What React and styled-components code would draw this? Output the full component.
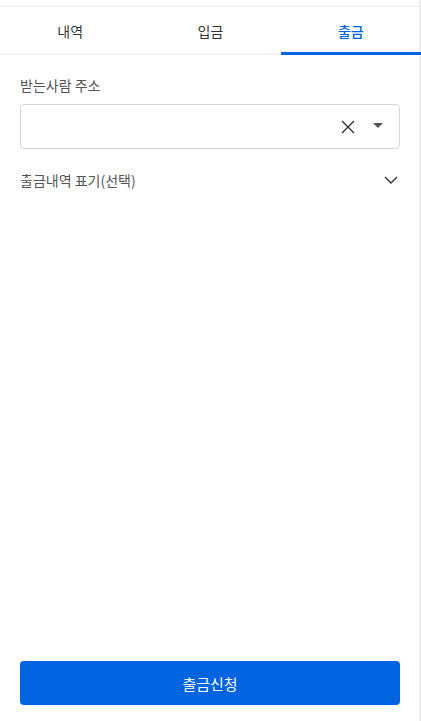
import React, { useState } from 'react'
import styled, { createGlobalStyle } from 'styled-components'

const GlobalStyle = createGlobalStyle`
  html, body {
    margin: 0;
    padding: 0;
    background: #fff;
  }
  body {
    font-family: "Noto Sans CJK KR", "Noto Sans", sans-serif;
    color: #333;
  }
  * { box-sizing: border-box; }
`

const Page = styled.div`
  width: 421px;
  height: 721px;
  display: flex;
  flex-direction: column;
  padding-top: 6px;
  border-right: 2px solid #ececf0;
`

const Tabs = styled.div`
  display: flex;
  border-top: 1px solid #ececf0;
  border-bottom: 1px solid #ececf0;
  margin-right: -2px;
`

const Tab = styled.button`
  flex: 1;
  height: 48px;
  border: none;
  background: none;
  font-family: inherit;
  font-size: 14px;
  color: ${p => (p.$active ? '#0064e0' : '#333')};
  font-weight: ${p => (p.$active ? 500 : 400)};
  border-bottom: 3px solid ${p => (p.$active ? '#0064e0' : 'transparent')};
  margin-bottom: -1px;
  padding: 3px 0 0;
  cursor: pointer;
`

const Body = styled.div`
  flex: 1;
  display: flex;
  flex-direction: column;
  padding: 20px 19px 0 20px;
`

const Label = styled.div`
  font-size: 14px;
  color: #555;
  line-height: 20px;
  margin-bottom: 9px;
`

const SelectBox = styled.div`
  height: 45px;
  border: 1px solid #d6d6da;
  border-radius: 4px;
  display: flex;
  align-items: center;
  justify-content: flex-end;
  gap: 18px;
  padding-right: 16px;
`

const IconButton = styled.span`
  display: flex;
  align-items: center;
  color: #333;
`

const Caret = styled.span`
  width: 0;
  height: 0;
  border-left: 5.5px solid transparent;
  border-right: 5.5px solid transparent;
  border-top: 5px solid #555;
  margin-top: -3px;
`

const Accordion = styled.div`
  display: flex;
  align-items: center;
  justify-content: space-between;
  margin-top: 19px;
  font-size: 14px;
  color: #555;
  line-height: 24px;
  padding-right: 2px;
`

const Spacer = styled.div`
  flex: 1;
`

const Submit = styled.button`
  height: 44px;
  margin-bottom: 16px;
  border: none;
  border-radius: 4px;
  background: #0064e0;
  color: #fff;
  font-family: inherit;
  font-size: 15px;
  cursor: pointer;
`

export default function App() {
  const [tab, setTab] = useState(2)
  const tabs = ['내역', '입금', '출금']
  return (
    <>
      <GlobalStyle />
      <Page>
        <Tabs>
          {tabs.map((t, i) => (
            <Tab key={t} $active={tab === i} onClick={() => setTab(i)}>
              {t}
            </Tab>
          ))}
        </Tabs>
        <Body>
          <Label>받는사람 주소</Label>
          <SelectBox>
            <IconButton>
              <svg width="14" height="14" viewBox="0 0 14 14" fill="none" stroke="#333" strokeWidth="1.4">
                <path d="M1 1L13 13M13 1L1 13" />
              </svg>
            </IconButton>
            <Caret />
          </SelectBox>
          <Accordion>
            <span>출금내역 표기(선택)</span>
            <svg width="14" height="8" viewBox="0 0 14 8" fill="none" stroke="#333" strokeWidth="1.4">
              <path d="M1 1L7 7L13 1" />
            </svg>
          </Accordion>
          <Spacer />
          <Submit>출금신청</Submit>
        </Body>
      </Page>
    </>
  )
}
